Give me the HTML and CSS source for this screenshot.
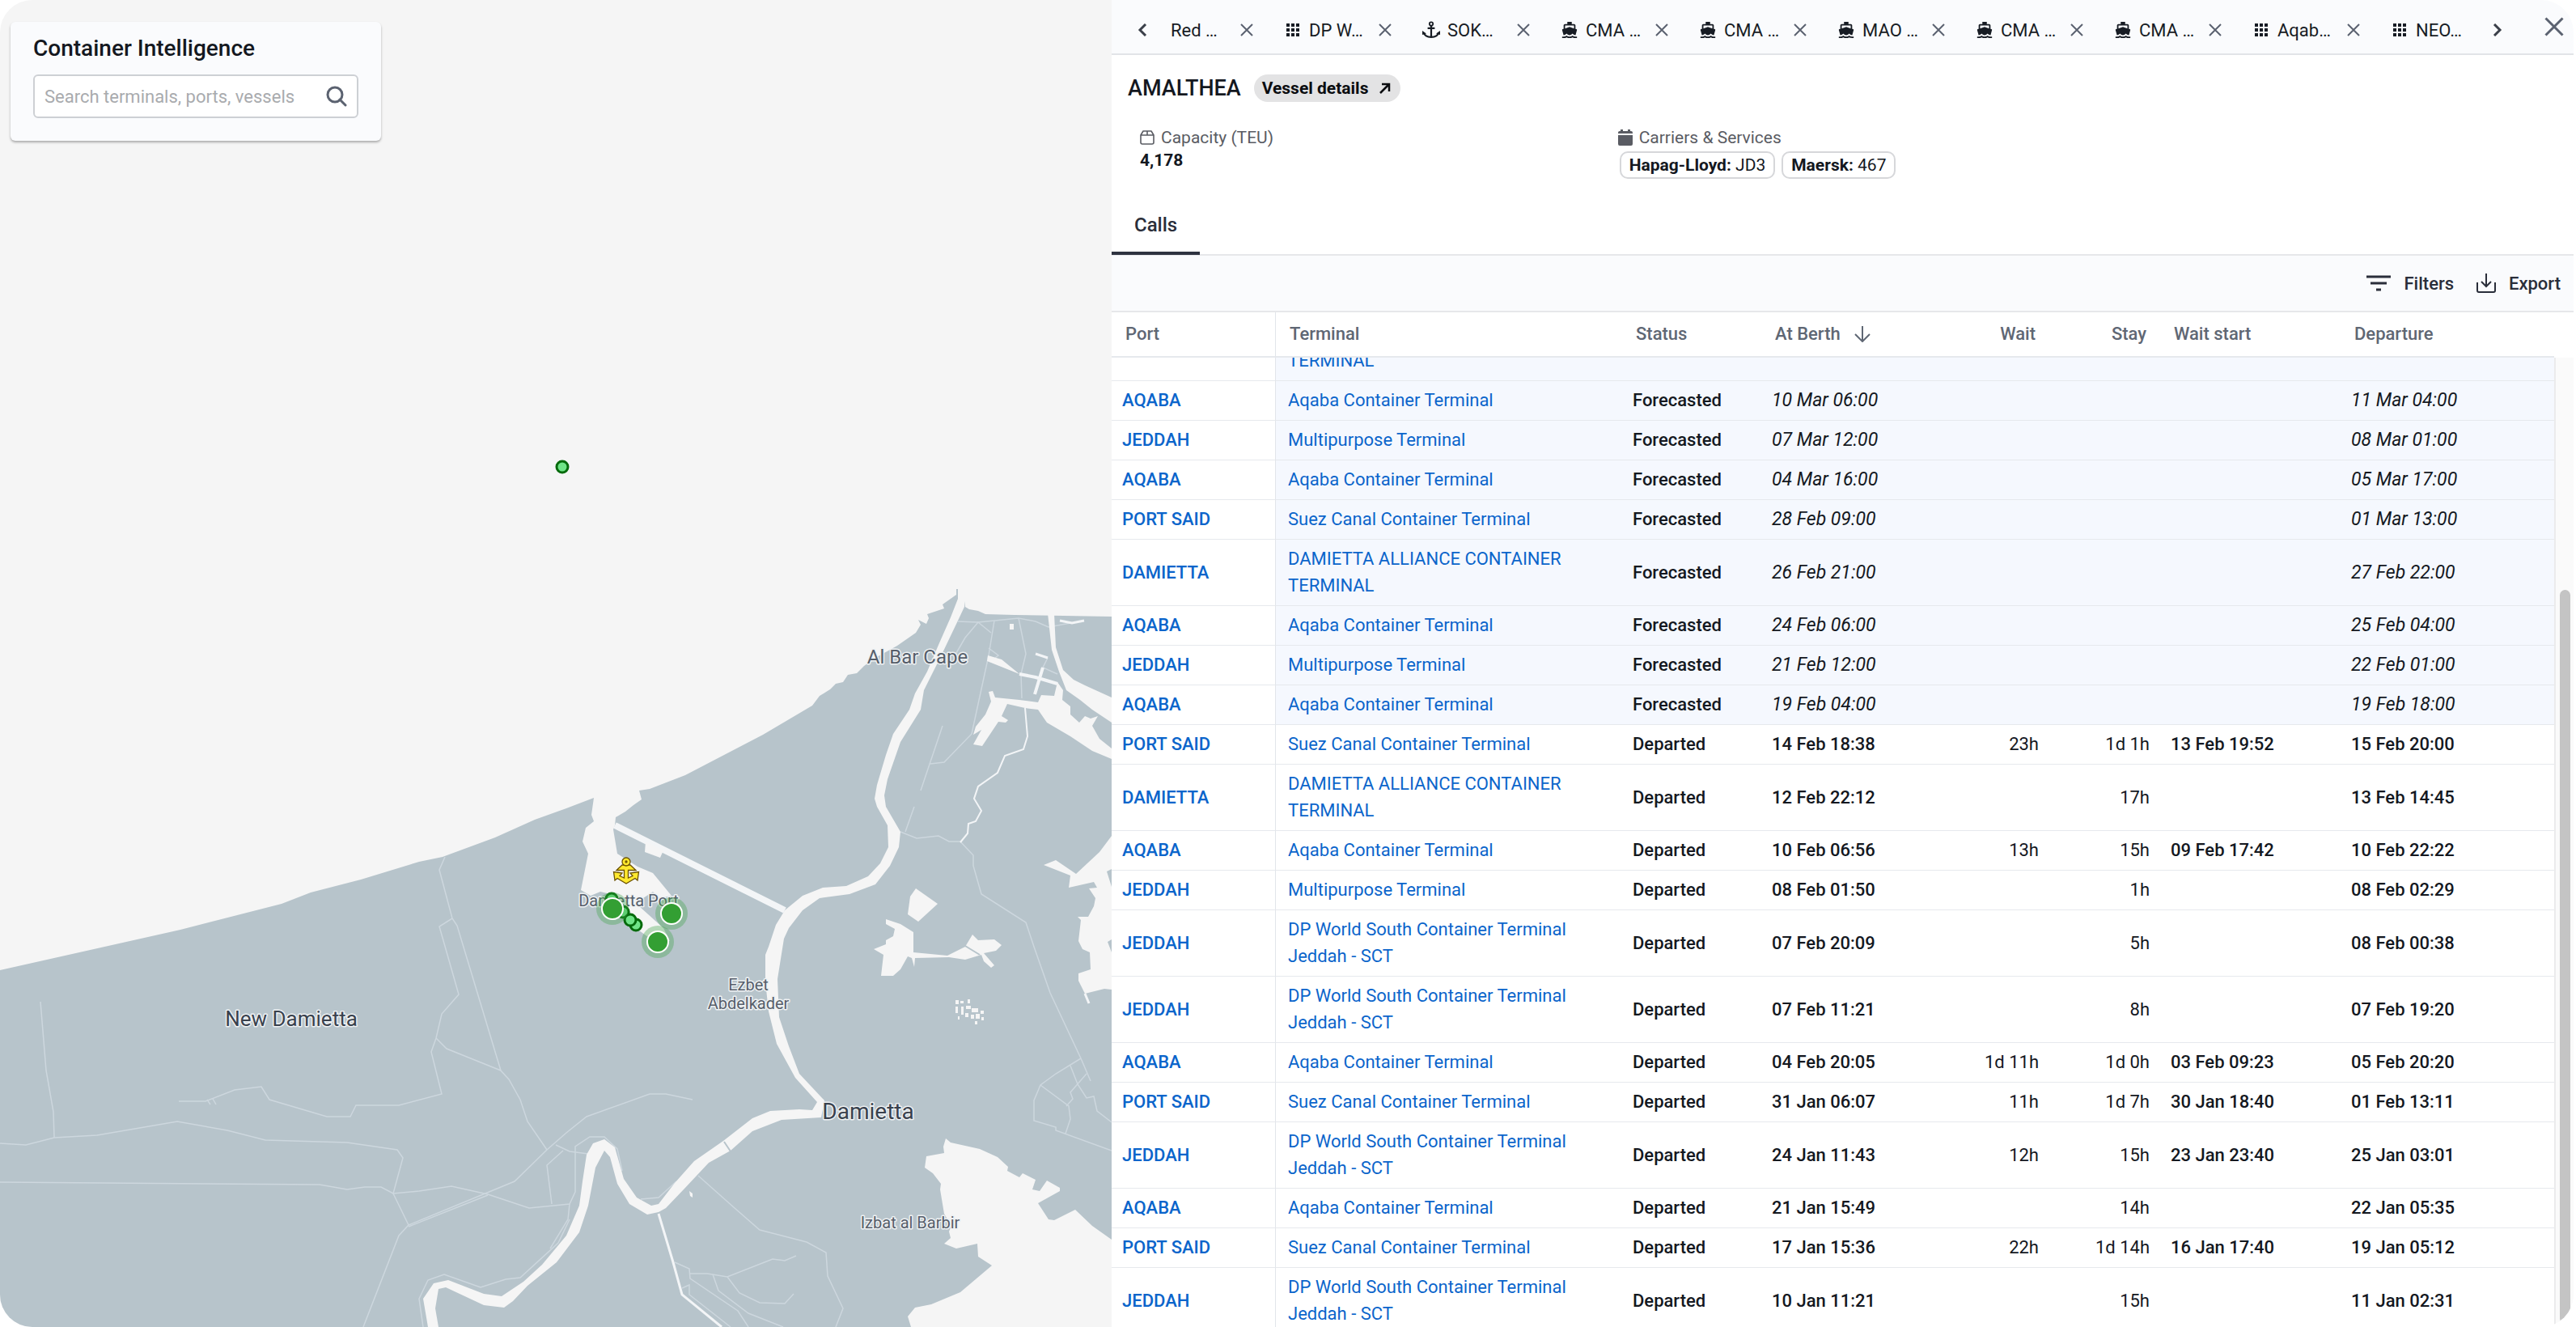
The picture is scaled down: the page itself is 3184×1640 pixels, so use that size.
FILE: index.html
```
<!DOCTYPE html>
<html lang="en">
<head>
    <meta charset="UTF-8">
    <meta name="viewport" content="width=device-width, initial-scale=1.0">
    <title>Container Intelligence</title>
    <link rel="stylesheet" href="styles.css">
</head>
<body>
<!-- Shared icons -->
<svg class="sprite" aria-hidden="true">
    <symbol id="i-x" viewBox="0 0 16 16"><path d="M1 1l14 14M15 1L1 15" fill="none" stroke="currentColor" stroke-width="2" /></symbol>
    <symbol id="i-grid" viewBox="0 0 18 18"><path d="M1 1h4v4H1zM7 1h4v4H7zM13 1h4v4h-4zM1 7h4v4H1zM7 7h4v4H7zM13 7h4v4h-4zM1 13h4v4H1zM7 13h4v4H7zM13 13h4v4h-4z" fill="currentColor" /></symbol>
    <symbol id="i-anchor" viewBox="0 0 20 20"><path d="M10 5.500V18M6 8h8M1.500 13c1 3.500 4.500 5 8.500 5s7.500-1.500 8.500-5" fill="none" stroke="currentColor" stroke-width="2" /><circle cx="10" cy="3.200" r="2" fill="none" stroke="currentColor" stroke-width="1.600" /><path d="M0 15.500V11l4.500 3zM20 15.500V11l-4.500 3z" fill="currentColor" /></symbol>
    <symbol id="i-ship" viewBox="0 0 24 24"><path d="M20 21c-1.390 0-2.780-.47-4-1.320-2.440 1.710-5.560 1.710-8 0C6.780 20.530 5.390 21 4 21H2v2h2c1.380 0 2.740-.35 4-.99 2.520 1.290 5.480 1.290 8 0 1.260.65 2.620.99 4 .99h2v-2h-2zM3.950 19H4c1.600 0 3.020-.88 4-2 .98 1.120 2.400 2 4 2s3.020-.88 4-2c.98 1.120 2.400 2 4 2h.050l1.890-6.680c.08-.26.06-.54-.06-.78s-.34-.42-.6-.5L20 10.620V6c0-1.100-.9-2-2-2h-3V1H9v3H6c-1.100 0-2 .9-2 2v4.620l-1.290.42c-.26.08-.48.26-.6.5s-.15.52-.06.780L3.950 19zM6 6h12v3.970L12 8 6 9.970V6z" fill="currentColor" /></symbol>
</svg>

<div class="app">
    <!-- Map -->
    <section class="map-pane">
        <svg class="map" viewBox="0 0 1374 1640" preserveAspectRatio="xMidYMid slice" role="img" aria-label="Map of Damietta">
            <path class="land" d="M0 1199L223 1149L348 1117L384 1103L446 1087L518 1065L547 1059L612 1035L661 1013L700 999L734 986L731 1007L734 1015L724 1023L720 1040L727 1055L718 1100L730 1107L742 1102L755 1105L777 1123L790 1150L808 1163L828 1163L820 1147L790 1120L795 1110L807 1102L815 1110L830 1107L807 1079L788 1071L763 1055L758 1025L760 1020L761 1010L773 1003L783 995L793 988L790 977L803 975L847 958L943 908L1004 872L1013 860L1026 852L1033 845L1042 843L1048 834L1059 832L1068 823L1082 813L1109 798L1132 782L1138 772L1135 766L1145 771L1148 764L1146 759L1167 752L1165 747L1182 735L1182 728L1184 728L1184 740L1192 743L1193 750L1198 753L1209 755L1218 759L1254 760L1374 762V1640H0z" />
            <g class="road">
                <path d="M0 1413L32 1415L67 1406L120 1403L219 1386L281 1397L328 1409L429 1412L491 1421L498 1431L486 1475L505 1514" />
                <path d="M50 1238L57 1323L66 1374L67 1406" />
                <path d="M0 1461L395 1464L429 1470L451 1467L471 1467L486 1475L518 1472L558 1466L603 1476L654 1493L704 1488L711 1473V1417L729 1405L747 1405L763 1420L769 1447" />
                <path d="M449 1640L493 1527L505 1514L636 1460L676 1421L700 1400L725 1380L803 1352L823 1352L856 1359M505 1516L603 1477" />
                <path d="M221 1361H254L290 1347L323 1343L333 1359L404 1380H433L440 1366H493L546 1352L533 1300L539 1283L546 1253L567 1229L543 1145L559 1135" />
                <path d="M256 1359l4 6M263 1358l4 7M550 1059L543 1075L559 1135L565 1144L603 1270L619 1323L629 1334L643 1359L652 1386L676 1421M539 1283L552 1296L619 1323" />
                <path d="M687 1415L704 1423L727 1426M696 1422L676 1440L682 1488M704 1488L702 1507L680 1543" />
                <path d="M523 1640L518 1605L529 1582L549 1575L594 1591L625 1581L643 1579L690 1536L704 1507M792 1482L814 1480L836 1460" />
                <path d="M863 1453L908 1493L939 1520L997 1535L1021 1548L1023 1577L1042 1617L1033 1640" />
                <path d="M834 1560L852 1568L853 1580L912 1620L925 1640M853 1574H874L899 1578L955 1556L970 1558L984 1552" />
                <path d="M899 1578L914 1598L939 1610L970 1611L981 1599M881 1575L888 1595L925 1623L968 1640M843 1592L852 1588V1600L903 1640" />
                <path d="M1184 768L1209 769L1259 764L1280 768L1296 775L1323 770M1259 764L1268 808L1262 833L1263 863" />
                <path d="M1229 767L1222 810L1201 907L1167 942L1150 944M1165 897L1138 977M1130 997L1119 1028M1182 807L1193 788L1209 769L1225 782" />
                <path d="M1222 801L1234 810L1230 813M1295 813L1289 825L1307 833" />
                <path d="M1113 1028L1133 1036L1160 1033L1173 1040H1187L1203 1057V1070L1213 1105L1268 1140L1278 1170L1298 1227L1336 1308L1348 1336" />
                <path d="M1336 1308L1305 1327L1286 1341L1278 1360V1385L1305 1393V1397L1374 1422M1286 1341L1321 1367L1323 1383L1317 1401" />
                <path d="M1323 1317L1332 1340L1343 1357L1352 1355L1356 1373L1374 1387M1343 1327L1323 1350L1326 1358L1318 1367" />
            </g>
            <g class="canal">
                <path d="M760 1020L970 1125" stroke-width="8" />
                <path d="M814 1500L832 1560L843 1600L892 1640" stroke-width="3" />
                <path d="M1267 875L1270 910L1265 926L1242 934L1233 955L1209 972L1204 987L1213 1002L1206 1015L1197 1018L1196 1030L1187 1041" stroke-width="2" />
                <path d="M1260 833L1280 837L1307 845M1289 825L1279 858" stroke-width="4" />
                <path d="M1280 808L1295 813M1310 767L1325 770L1340 767M1341 1228L1346 1240" stroke-width="3" />
            </g>
            <g class="water">
                <path d="M1184 740L1175 763L1160 797L1146 830L1131 857L1124 877L1104 907L1095 933L1084 970L1081 987L1084 997L1097 1020L1098 1047L1088 1067L1073 1083L1046 1095L1017 1097L992 1107L970 1125L959 1143L950 1170L946 1180V1213L950 1250L960 1290L983 1332L1010 1362L1004 1372L988 1371L952 1373L930 1382L894 1410L858 1435L834 1462L814 1488L805 1490L787 1480L771 1457L760 1418L747 1408L733 1413L725 1427L720 1460L716 1490L700 1527L670 1563L647 1584L620 1602L598 1599L554 1582L536 1586L523 1605L529 1640H542L538 1617L542 1593L551 1591L598 1613L623 1616L634 1608L652 1589L688 1560L716 1523L727 1490L736 1443L747 1422L754 1430L763 1463L778 1488L800 1501L814 1498L823 1493L845 1470L876 1437L903 1422L930 1398L966 1384L1015 1381L1019 1360L988 1327L975 1293L963 1257L961 1210L969 1160L975 1147L992 1125L1013 1110L1050 1105L1082 1093L1100 1070L1111 1047L1113 1028L1095 997L1093 983L1097 963L1113 917L1138 877L1142 853L1162 813L1184 767L1192 750L1192 738z" />
                <path d="M798 1040L820 1051L816 1060L797 1053z" />
                <path d="M1295 758H1303L1305 800L1314 828L1327 840L1341 847L1374 862V893L1350 877L1335 865L1318 853L1309 830L1300 803z" />
                <path d="M1227 854L1230 862L1260 865L1283 868L1287 859L1303 860L1307 843L1314 853L1313 865L1323 873V883L1334 893L1341 885L1348 888L1357 885L1350 897L1359 913L1374 925V938L1350 928L1323 910L1294 893L1283 877L1267 875L1245 870L1238 885L1246 890L1243 893L1234 892L1214 922L1203 920L1213 902L1203 908L1206 898L1218 883L1225 867L1222 855z" />
                <path d="M1221 810L1238 815L1260 833L1220 817zM1248 771h5v7h-5zM852 1472l4 3v5l-3-2z" />
                <path d="M1132 1098L1159 1117L1135 1139L1122 1130L1125 1108z" />
                <path d="M1095 1136L1113 1142L1129 1152V1177L1171 1181L1193 1170L1202 1155L1209 1162L1229 1161L1238 1168L1231 1175L1216 1178L1229 1193L1225 1196L1216 1188L1213 1180L1193 1186L1173 1183L1131 1184L1130 1195L1127 1184L1122 1182L1113 1198L1104 1206H1089L1092 1180L1080 1173L1095 1167V1162L1104 1157L1106 1148L1095 1142z" />
                <path d="M1181 1236h4v5h-4zM1187 1237h4v3h-4zM1196 1235h3v5h-3zM1181 1244h3v8h-3zM1188 1244h3v10h-3zM1194 1243h6v4h-6zM1201 1246h8v5h-8zM1193 1252h4v5h-4zM1200 1254h4v5h-4zM1206 1253h5v6h-5zM1212 1249h4v4h-4zM1213 1257h3v4h-3zM1184 1256h2v4h-2zM1205 1262h3v4h-3z" />
                <path d="M1374 1033L1359 1053L1330 1080L1305 1063L1290 1069L1323 1082L1321 1097L1352 1090L1356 1097L1346 1098L1354 1110L1352 1120L1345 1133H1332L1336 1137L1333 1163L1338 1173L1347 1177L1348 1198L1333 1203V1212L1341 1228L1365 1222L1374 1223z" />
                <path d="M1169 1407L1175 1412L1211 1420L1233 1430L1246 1442L1245 1447L1260 1455L1264 1450L1280 1458L1276 1470L1285 1472L1294 1459L1310 1468V1472L1283 1487L1296 1507L1303 1508L1329 1495L1350 1515L1374 1532V1640H1126L1122 1627L1131 1616L1151 1612L1187 1597L1226 1564L1209 1553L1208 1537L1182 1543L1167 1537L1175 1530L1173 1522L1176 1515L1167 1500L1162 1470L1163 1463L1153 1450L1143 1443L1145 1429L1167 1425L1166 1417z" />
            </g>
            <path d="M895 1411L903 1423M1193 1169L1211 1180" stroke="#b7c4cb" stroke-width="2" />
            <path d="M1368 1077l6-3v22zM1369 1164l5-3v16z" fill="#b7c4cb" />
            <g class="labels">
                <text class="town" x="360" y="1268">New Damietta</text>
                <text class="city" x="1073" y="1383">Damietta</text>
                <text class="cape" x="1134" y="820">Al Bar Cape</text>
                <text class="village" x="777" y="1120">Damietta Port</text>
                <text class="village" x="925" y="1224">Ezbet</text>
                <text class="village" x="925" y="1247">Abdelkader</text>
                <text class="village" x="1125" y="1518">Izbat al Barbir</text>
            </g>
            <g class="pings">
                <circle cx="695" cy="577" r="7" />
                <circle cx="756" cy="1111" r="7" />
                <circle cx="770" cy="1127" r="7" />
                <circle cx="786" cy="1143" r="7" />
                <circle cx="779" cy="1137" r="7" />
            </g>
            <g class="halos"><circle cx="757" cy="1123" r="20" /><circle cx="830" cy="1129" r="20" /><circle cx="813" cy="1164" r="20" /></g>
            <g class="terminals"><circle cx="757" cy="1123" r="13" /><circle cx="830" cy="1129" r="13" /><circle cx="813" cy="1164" r="13" /></g>
            <g class="anchorage">
                <path d="M769 1069L762 1075.500H771.500V1085L766 1082.500L769 1079L758.500 1077.500L760 1088L763 1085.500L774 1092L785 1085.500L788 1088L789.500 1077.500L779 1079L782 1082.500L776.500 1085V1075.500H786L779 1069z" />
                <circle cx="774" cy="1065" r="5" />
                <circle cx="774" cy="1065" r="1" />
            </g>
        </svg>

        <div class="search-card">
            <h1>Container Intelligence</h1>
            <div class="search-box">
                <input type="text" id="search" aria-label="Search" placeholder="Search terminals, ports, vessels">
                <svg viewBox="0 0 26 26"><circle cx="11" cy="11" r="9" fill="none" stroke="currentColor" stroke-width="3" /><path d="M17 17l7 7" stroke="currentColor" stroke-width="3" stroke-linecap="round" /></svg>
            </div>
        </div>
    </section>

    <!-- Vessel panel -->
    <section class="panel">
        <nav class="tabbar">
            <button class="nav-btn" aria-label="Previous tabs"><svg viewBox="0 0 12 16"><path d="M10 1L3 8l7 7" /></svg></button>
            <div class="tabs" id="tabs"></div>
            <button class="nav-btn next" aria-label="Next tabs"><svg viewBox="0 0 12 16"><path d="M2 1l7 7-7 7" /></svg></button>
            <button class="close-btn" aria-label="Close panel"><svg><use href="#i-x" /></svg></button>
        </nav>

        <div class="vessel-head">
            <h2>AMALTHEA</h2>
            <button class="pill">Vessel details
                <svg viewBox="0 0 14 14"><path d="M1 13L12 2M3 2h9v9" fill="none" stroke="currentColor" stroke-width="2.500" /></svg>
            </button>
        </div>

        <div class="facts">
            <div class="fact">
                <div class="fact-label">
                    <svg viewBox="0 0 18 18"><path d="M1 6L4 1h10l3 5v9a2 2 0 0 1-2 2H3a2 2 0 0 1-2-2zM1 6h16M9 1v5" fill="none" stroke="currentColor" stroke-width="1.600" stroke-linejoin="round" /></svg>
                    Capacity (TEU)
                </div>
                <strong>4,178</strong>
            </div>
            <div class="fact">
                <div class="fact-label">
                    <svg viewBox="0 0 18 20"><path d="M0 5V4q0-2 2-2h1V0h3v2h6V0h3v2h1q2 0 2 2v1zM0 7h18v11q0 2-2 2H2q-2 0-2-2z" fill="currentColor" /></svg>
                    Carriers &amp; Services
                </div>
                <div class="chips">
                    <span class="chip"><b>Hapag-Lloyd:</b> JD3</span>
                    <span class="chip"><b>Maersk:</b> 467</span>
                </div>
            </div>
        </div>

        <div class="sections"><button class="section-tab">Calls</button></div>

        <div class="toolbar">
            <button class="tool">
                <svg viewBox="0 0 30 24"><path d="M0 4h30M5 12h20M12 20h6" fill="none" stroke="currentColor" stroke-width="3" /></svg>
                Filters
            </button>
            <button class="tool export">
                <svg viewBox="0 0 24 24"><path d="M12 0v16M6 10l6 6 6-6M1 11v10q0 2 2 2h18q2 0 2-2V11" fill="none" stroke="currentColor" stroke-width="2" /></svg>
                Export
            </button>
        </div>

        <div class="calls">
            <div class="scroller" id="scroller">
                <table>
                    <colgroup>
                        <col class="c-port"><col class="c-terminal"><col class="c-status"><col class="c-berth">
                        <col class="c-wait"><col class="c-stay"><col class="c-start"><col>
                    </colgroup>
                    <thead>
                        <tr>
                            <th>Port</th><th>Terminal</th><th>Status</th>
                            <th>At Berth <svg viewBox="0 0 20 20"><path d="M10 0v18M1 10l9 9 9-9" fill="none" stroke="currentColor" stroke-width="2" /></svg></th>
                            <th class="num">Wait</th><th class="num">Stay</th><th>Wait start</th><th>Departure</th>
                        </tr>
                    </thead>
                    <tbody id="rows"></tbody>
                </table>
            </div>
            <div class="track"><div class="thumb"></div></div>
        </div>
    </section>
</div>
<script src="script.js"></script>
</body>
</html>
```
FILE: styles.css
```
* {
    box-sizing: border-box;
}

body {
    margin: 0;
    background: #fff;
    color: #14181f;
    font-family: Roboto, "Liberation Sans", sans-serif;
    font-size: 22px;
}

button {
    padding: 0;
    border: none;
    background: none;
    color: inherit;
    font: inherit;
    cursor: pointer;
}

a {
    color: #0b65cb;
    text-decoration: none;
}

.sprite {
    position: absolute;
    width: 0;
    height: 0;
}

.app {
    display: grid;
    grid-template-columns: 1374fr 1807fr;
    height: 100vh;
    margin-right: 3px;
    border-radius: 40px;
    overflow: hidden;
}

/* Map */
.map-pane {
    position: relative;
    background: #f5f5f5;
    overflow: hidden;
}

.map {
    display: block;
    width: 100%;
    height: 100%;
}

.land {
    fill: #b7c4cb;
}

.road {
    fill: none;
    stroke: #cdd7de;
    stroke-width: 1.5;
}

.canal {
    fill: none;
    stroke: #f3f5f7;
}

.water {
    fill: #f5f5f5;
}

.labels text {
    text-anchor: middle;
    fill: #565e6a;
    stroke: #eef1f3;
    stroke-width: 3px;
    stroke-linejoin: round;
    paint-order: stroke;
}

.labels .town {
    font-size: 26px;
    fill: #39414d;
}

.labels .city {
    font-size: 28px;
    fill: #39414d;
}

.labels .cape {
    font-size: 24px;
}

.labels .village {
    font-size: 20px;
}

.pings circle {
    fill: #6fe487;
    stroke: #046a0b;
    stroke-width: 3;
}

.halos circle {
    fill: #3ba345;
    opacity: 0.35;
}

.terminals circle {
    fill: #339f33;
    stroke: #fff;
    stroke-width: 2;
}

.anchorage {
    fill: #ffe92e;
    stroke: #6b5200;
    stroke-width: 1.3;
}

.search-card {
    position: absolute;
    top: 27px;
    left: 13px;
    width: 458px;
    padding: 16px 28px 28px;
    border-radius: 6px;
    background: #fafbfd;
    box-shadow: 0 2px 3px rgba(0, 0, 0, 0.3);
}

.search-card h1 {
    margin: 0 0 15px;
    font-size: 28px;
    font-weight: 500;
    line-height: 34px;
}

.search-box {
    display: flex;
    align-items: center;
    height: 54px;
    padding: 0 12px;
    border: 2px solid #cdd0d4;
    border-radius: 6px;
    background: #fff;
}

.search-box input {
    flex: 1;
    min-width: 0;
    border: none;
    outline: none;
    background: none;
    font: inherit;
    padding: 0;
}

.search-box input::placeholder {
    color: #a9abae;
}

.search-box svg {
    width: 26px;
    height: 26px;
    color: #5b6270;
}

/* Panel */
.panel {
    display: flex;
    flex-direction: column;
    min-width: 0;
    min-height: 0;
    background: #fff;
}

.tabbar {
    display: flex;
    align-items: center;
    height: 68px;
    padding: 8px 12px 0 32px;
    border-bottom: 2px solid #e2e4e8;
    background: #fafbfd;
}

.nav-btn {
    width: 12px;
    height: 16px;
    color: #3a3f49;
}

.nav-btn svg {
    display: block;
    width: 12px;
    height: 16px;
    fill: none;
    stroke: currentColor;
    stroke-width: 3;
}

.next {
    margin: 0 52px 0 18px;
}

.close-btn {
    width: 24px;
    height: 24px;
    margin-bottom: 8px;
    color: #5b6270;
}

.close-btn svg {
    display: block;
    width: 24px;
    height: 24px;
}

.tabs {
    display: flex;
    flex: 1;
    min-width: 0;
    overflow: hidden;
}

.tab {
    display: flex;
    flex: 0 0 171px;
    align-items: center;
    color: #171c24;
}

.tab-label {
    display: flex;
    align-items: center;
    width: 115px;
    white-space: nowrap;
}

.tab-icon {
    width: 18px;
    height: 18px;
    margin-right: 11px;
}

.tab-icon.ship,
.tab-icon.anchor {
    width: 22px;
    height: 22px;
    margin: 0 9px 0 -2px;
}

.tab-close {
    width: 16px;
    height: 16px;
    color: #5b6270;
}

.tab-close svg {
    display: block;
    width: 16px;
    height: 16px;
}

.vessel-head {
    display: flex;
    align-items: center;
    gap: 16px;
    padding: 24px 20px 0;
}

.vessel-head h2 {
    margin: 0;
    font-size: 27px;
    font-weight: 500;
    line-height: 34px;
}

.pill {
    display: flex;
    align-items: center;
    gap: 14px;
    height: 34px;
    padding: 0 12px 0 10px;
    border-radius: 17px;
    background: #e3e3e4;
    color: #0b0d10;
    font-size: 21px;
    font-weight: 700;
}

.pill svg {
    width: 14px;
    height: 14px;
}

.facts {
    display: grid;
    grid-template-columns: repeat(3, 1fr);
    height: 114px;
    padding: 31px 0 0 35px;
}

.fact-label {
    display: flex;
    align-items: center;
    gap: 8px;
    height: 26px;
    color: #5a5c63;
    font-size: 21px;
}

.fact-label svg {
    width: 18px;
    height: 20px;
}

.fact strong {
    display: block;
    font-size: 21px;
    line-height: 30px;
}

.chips {
    display: flex;
    gap: 8px;
    padding: 4px 0 0 2px;
}

.chip {
    height: 34px;
    padding: 0 10px;
    border: 2px solid #d6d7da;
    border-radius: 10px;
    font-size: 21px;
    line-height: 30px;
}

.sections {
    display: flex;
    height: 76px;
    border-bottom: 2px solid #e6e7ea;
}

.section-tab {
    height: 75px;
    padding: 4px 28px 0;
    border-bottom: 4px solid #2e3340;
    color: #2a2e3a;
    font-size: 24px;
    font-weight: 500;
}

.toolbar {
    display: flex;
    align-items: center;
    justify-content: flex-end;
    gap: 28px;
    height: 70px;
    padding: 0 16px;
    border-bottom: 2px solid #e6e7ea;
    background: #fafbfd;
    color: #2a2e3a;
}

.tool {
    display: flex;
    align-items: center;
    gap: 16px;
    font-weight: 500;
}

.tool svg {
    width: 30px;
    height: 24px;
}

.tool.export svg {
    width: 24px;
}

/* Calls table */
.calls {
    display: flex;
    flex: 1;
    min-height: 0;
}

.scroller {
    flex: 1;
    min-width: 0;
    overflow: hidden;
}

table {
    width: 100%;
    table-layout: fixed;
    border-collapse: separate;
    border-spacing: 0;
}

.c-port { width: 203px; }
.c-terminal { width: 428px; }
.c-status { width: 172px; }
.c-berth { width: 226px; }
.c-wait { width: 130px; }
.c-stay { width: 137px; }
.c-start { width: 223px; }

th {
    position: sticky;
    top: 0;
    height: 56px;
    padding: 0 17px 2px;
    border-bottom: 2px solid #e6e9ed;
    background: #fff;
    color: #5f6774;
    font-weight: 500;
    text-align: left;
}

th svg {
    width: 20px;
    height: 20px;
    margin-left: 12px;
    vertical-align: -3px;
}

td {
    height: 49px;
    padding: 7px 13px 8px;
    border-bottom: 1px solid #e6e9ed;
    line-height: 33px;
}

th:first-child,
td:first-child {
    border-right: 1px solid #e2e5ea;
    font-weight: 500;
}

td:nth-child(2) {
    padding-left: 15px;
}

.num {
    text-align: right;
}

.status,
.date {
    font-weight: 500;
}

.forecast td:not(:first-child) {
    background: #f5f8fe;
}

.forecast .date {
    font-size: 23px;
    font-style: italic;
    font-weight: 400;
}

.track {
    display: flex;
    align-items: flex-end;
    width: 24px;
    margin-top: 56px;
    padding: 0 4px 4px 5px;
    border-left: 2px solid #ebebec;
    background: #fafafa;
}

.thumb {
    width: 14px;
    height: 76%;
    border-radius: 7px;
    background: #c4c4c4;
}
```
FILE: script.js
```
const tabs = [
    ['', 'Red …'],
    ['grid', 'DP W…'],
    ['anchor', 'SOK…'],
    ['ship', 'CMA …'],
    ['ship', 'CMA …'],
    ['ship', 'MAO …'],
    ['ship', 'CMA …'],
    ['ship', 'CMA …'],
    ['grid', 'Aqab…'],
    ['grid', 'NEO…']
];

const AQABA = 'Aqaba Container Terminal';
const SUEZ = 'Suez Canal Container Terminal';
const MULTI = 'Multipurpose Terminal';
const ALLIANCE = 'DAMIETTA ALLIANCE CONTAINER TERMINAL';
const SOUTH = 'DP World South Container Terminal Jeddah - SCT';

// port, terminal, at berth, departure
const forecasted = [
    ['', ALLIANCE, '', ''],
    ['AQABA', AQABA, '10 Mar 06:00', '11 Mar 04:00'],
    ['JEDDAH', MULTI, '07 Mar 12:00', '08 Mar 01:00'],
    ['AQABA', AQABA, '04 Mar 16:00', '05 Mar 17:00'],
    ['PORT SAID', SUEZ, '28 Feb 09:00', '01 Mar 13:00'],
    ['DAMIETTA', ALLIANCE, '26 Feb 21:00', '27 Feb 22:00'],
    ['AQABA', AQABA, '24 Feb 06:00', '25 Feb 04:00'],
    ['JEDDAH', MULTI, '21 Feb 12:00', '22 Feb 01:00'],
    ['AQABA', AQABA, '19 Feb 04:00', '19 Feb 18:00']
];

// port, terminal, at berth, departure, wait, stay, wait start
const departed = [
    ['PORT SAID', SUEZ, '14 Feb 18:38', '15 Feb 20:00', '23h', '1d 1h', '13 Feb 19:52'],
    ['DAMIETTA', ALLIANCE, '12 Feb 22:12', '13 Feb 14:45', '', '17h', ''],
    ['AQABA', AQABA, '10 Feb 06:56', '10 Feb 22:22', '13h', '15h', '09 Feb 17:42'],
    ['JEDDAH', MULTI, '08 Feb 01:50', '08 Feb 02:29', '', '1h', ''],
    ['JEDDAH', SOUTH, '07 Feb 20:09', '08 Feb 00:38', '', '5h', ''],
    ['JEDDAH', SOUTH, '07 Feb 11:21', '07 Feb 19:20', '', '8h', ''],
    ['AQABA', AQABA, '04 Feb 20:05', '05 Feb 20:20', '1d 11h', '1d 0h', '03 Feb 09:23'],
    ['PORT SAID', SUEZ, '31 Jan 06:07', '01 Feb 13:11', '11h', '1d 7h', '30 Jan 18:40'],
    ['JEDDAH', SOUTH, '24 Jan 11:43', '25 Jan 03:01', '12h', '15h', '23 Jan 23:40'],
    ['AQABA', AQABA, '21 Jan 15:49', '22 Jan 05:35', '', '14h', ''],
    ['PORT SAID', SUEZ, '17 Jan 15:36', '19 Jan 05:12', '22h', '1d 14h', '16 Jan 17:40'],
    ['JEDDAH', SOUTH, '10 Jan 11:21', '11 Jan 02:31', '', '15h', '']
];

function rowHtml([port, terminal, berth, departure, wait = '', stay = '', start = ''], status) {
    return `
        <tr class="${status === 'Forecasted' ? 'forecast' : ''}">
            <td><a href="#">${port}</a></td>
            <td><a href="#">${terminal}</a></td>
            <td class="status">${port ? status : ''}</td>
            <td class="date">${berth}</td>
            <td class="num">${wait}</td>
            <td class="num">${stay}</td>
            <td class="date">${start}</td>
            <td class="date">${departure}</td>
        </tr>`;
}

document.getElementById('tabs').innerHTML = tabs.map(([icon, label], i) => `
    <div class="tab">
        <button class="tab-label"><svg class="tab-icon ${icon}">${icon ? `<use href="#i-${icon}" />` : ''}</svg>${label}</button>
        ${i < tabs.length - 1 ? '<button class="tab-close" aria-label="Close tab"><svg><use href="#i-x" /></svg></button>' : ''}
    </div>
`).join('');

document.getElementById('rows').innerHTML =
    forecasted.map(row => rowHtml(row, 'Forecasted')).join('') +
    departed.map(row => rowHtml(row, 'Departed')).join('');

// the list opens scrolled down a little
document.getElementById('scroller').scrollTop = 53;
```
